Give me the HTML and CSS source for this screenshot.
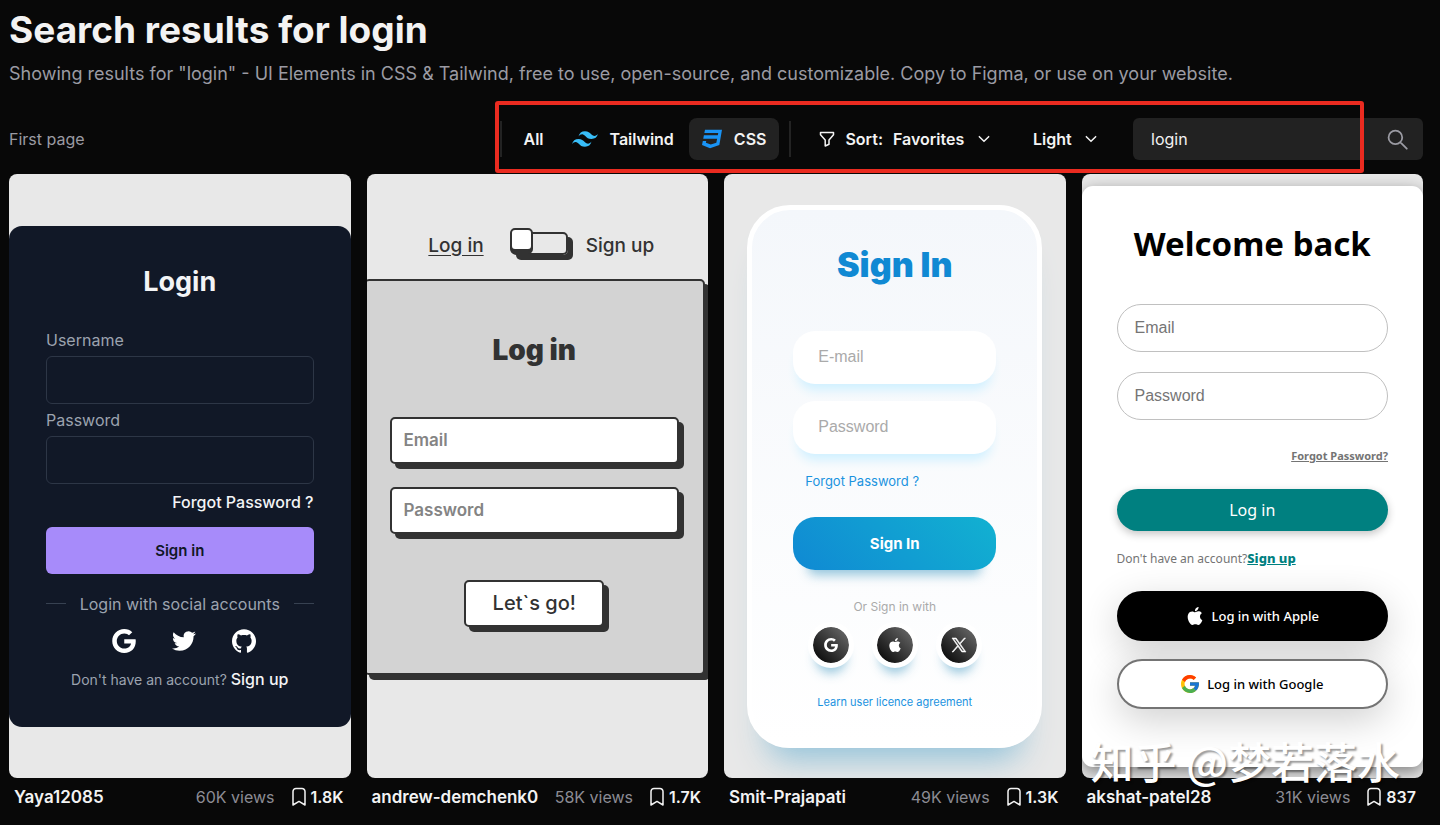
FILE: index.html
```html
<!DOCTYPE html>
<html lang="en">
<head>
    <meta charset="UTF-8">
    <meta name="viewport" content="width=device-width, initial-scale=1.0">
    <title>Search results for login</title>
    <link rel="stylesheet" href="styles.css">
</head>
<body>
    <!-- shared icons -->
    <svg class="sprite" aria-hidden="true">
        <symbol id="i-google" viewBox="0 0 32 32"><path d="M16.318 13.714v5.484h9.078c-0.37 2.354-2.745 6.901-9.078 6.901-5.458 0-9.917-4.521-9.917-10.099s4.458-10.099 9.917-10.099c3.109 0 5.193 1.318 6.38 2.464l4.339-4.182c-2.786-2.599-6.396-4.182-10.719-4.182-8.844 0-16 7.151-16 16s7.156 16 16 16c9.234 0 15.365-6.49 15.365-15.635 0-1.052-0.115-1.854-0.255-2.651z"/></symbol>
        <symbol id="i-apple" viewBox="0 0 24 24"><path d="M12.152 6.896c-.948 0-2.415-1.078-3.96-1.04-2.04.027-3.91 1.183-4.961 3.014-2.117 3.675-.546 9.103 1.519 12.09 1.013 1.454 2.208 3.09 3.792 3.039 1.52-.065 2.09-.987 3.935-.987 1.831 0 2.35.987 3.96.948 1.637-.026 2.676-1.48 3.676-2.948 1.156-1.688 1.636-3.325 1.662-3.415-.039-.013-3.182-1.221-3.22-4.857-.026-3.04 2.48-4.494 2.597-4.559-1.429-2.09-3.623-2.324-4.39-2.376-2-.156-3.675 1.09-4.61 1.09zM15.53 3.83c.843-1.012 1.4-2.427 1.245-3.83-1.207.052-2.662.805-3.532 1.818-.78.896-1.454 2.338-1.273 3.714 1.338.104 2.715-.688 3.559-1.701"/></symbol>
        <symbol id="i-chevron" viewBox="0 0 12 12"><path d="M2 4l4 4 4-4" fill="none" stroke="currentColor" stroke-width="1.3" stroke-linecap="round" stroke-linejoin="round"/></symbol>
        <symbol id="i-bookmark" viewBox="0 0 16 20"><path d="M2 18V4.500a3 3 0 0 1 3-3h6a3 3 0 0 1 3 3V18l-6-3.600z" fill="none" stroke="currentColor" stroke-width="1.500" stroke-linejoin="round"/></symbol>
    </svg>

    <div class="page">
        <h1 class="title">Search results for login</h1>
        <p class="subtitle">Showing results for "login" - UI Elements in CSS &amp; Tailwind, free to use, open-source, and customizable. Copy to Figma, or use on your website.</p>

        <div class="toolbar">
            <span class="page-label">First page</span>
            <div class="filters">
                <span class="divider"></span>
                <nav class="tabs">
                    <a class="tab" href="#">All</a>
                    <a class="tab" href="#">
                        <svg class="tab-icon tailwind" viewBox="0 0 24 24"><path d="M12.001 4.800c-3.200 0-5.200 1.600-6 4.800 1.200-1.600 2.600-2.200 4.200-1.800.913.228 1.565.89 2.288 1.624C13.666 10.618 15.027 12 18.001 12c3.200 0 5.200-1.600 6-4.800-1.200 1.600-2.600 2.200-4.200 1.800-.913-.228-1.565-.89-2.288-1.624C16.337 6.182 14.976 4.800 12.001 4.800zm-6 7.200c-3.200 0-5.200 1.600-6 4.800 1.200-1.600 2.600-2.200 4.200-1.800.913.228 1.565.89 2.288 1.624 1.177 1.194 2.538 2.576 5.512 2.576 3.200 0 5.200-1.600 6-4.800-1.200 1.600-2.600 2.200-4.200 1.800-.913-.228-1.565-.89-2.288-1.624C10.337 13.382 8.976 12 6.001 12z"/></svg>
                        Tailwind
                    </a>
                    <a class="tab active" href="#">
                        <svg class="tab-icon css" viewBox="0 0 480 432"><path d="M480 32l-64 368-223.300 80L0 400l19.600-94.800h82l-8 40.600L210 390.200l134.100-44.400 18.800-97.100H29.500l16-82h333.700l10.500-52.700H56.300l16.300-82H480z" transform="translate(0 -40)"/></svg>
                        CSS
                    </a>
                </nav>
                <span class="divider"></span>
                <div class="dropdown sort">
                    <svg class="funnel" viewBox="0 0 16 16"><path d="M1.500 1.500h13v2.200L10 9v4.200L6.200 15V9L1.500 3.700z" fill="none" stroke="currentColor" stroke-width="1.500" stroke-linejoin="round"/></svg>
                    <label for="sort">Sort:</label>
                    <select id="sort"><option>Favorites</option></select>
                    <svg class="chevron"><use href="#i-chevron"/></svg>
                </div>
                <div class="dropdown">
                    <select id="theme" aria-label="Theme"><option>Light</option></select>
                    <svg class="chevron"><use href="#i-chevron"/></svg>
                </div>
                <form class="search">
                    <input type="text" value="login" aria-label="Search">
                    <button type="button" aria-label="Search">
                        <svg viewBox="0 0 20 20"><path d="M8 1.500a6.500 6.500 0 1 0 0 13 6.500 6.500 0 0 0 0-13zM12.800 12.800l6 6" fill="none" stroke="currentColor" stroke-width="1.700" stroke-linecap="round"/></svg>
                    </button>
                </form>
                <span class="highlight"></span>
            </div>
        </div>

        <div class="grid">
            <article class="item">
                <div class="preview">
                    <form class="dark-card">
                        <h2>Login</h2>
                        <label for="dark-user">Username</label>
                        <input id="dark-user" type="text">
                        <label for="dark-pass">Password</label>
                        <input id="dark-pass" type="password">
                        <a class="forgot" href="#">Forgot Password ?</a>
                        <button type="button" class="sign">Sign in</button>
                        <div class="social-line">Login with social accounts</div>
                        <div class="social">
                            <a href="#" aria-label="Google"><svg><use href="#i-google"/></svg></a>
                            <a href="#" aria-label="Twitter"><svg viewBox="0 0 24 24"><path d="M23.953 4.570a10 10 0 01-2.825.775 4.958 4.958 0 002.163-2.723c-.951.555-2.005.959-3.127 1.184a4.920 4.920 0 00-8.384 4.482C7.690 8.095 4.067 6.130 1.640 3.162a4.822 4.822 0 00-.666 2.475c0 1.710.870 3.213 2.188 4.096a4.904 4.904 0 01-2.228-.616v.060a4.923 4.923 0 003.946 4.827 4.996 4.996 0 01-2.212.085 4.936 4.936 0 004.604 3.417 9.867 9.867 0 01-6.102 2.105c-.390 0-.779-.023-1.170-.067a13.995 13.995 0 007.557 2.209c9.053 0 13.998-7.496 13.998-13.985 0-.210 0-.420-.015-.630A9.935 9.935 0 0024 4.590z"/></svg></a>
                            <a href="#" aria-label="GitHub"><svg viewBox="0 0 24 24"><path d="M12 .297c-6.630 0-12 5.373-12 12 0 5.303 3.438 9.800 8.205 11.385.600.113.820-.258.820-.577 0-.285-.010-1.040-.015-2.040-3.338.724-4.042-1.610-4.042-1.610C4.422 18.070 3.633 17.700 3.633 17.700c-1.087-.744.084-.729.084-.729 1.205.084 1.838 1.236 1.838 1.236 1.070 1.835 2.809 1.305 3.495.998.108-.776.417-1.305.760-1.605-2.665-.300-5.466-1.332-5.466-5.930 0-1.310.465-2.380 1.235-3.220-.135-.303-.540-1.523.105-3.176 0 0 1.005-.322 3.300 1.230.960-.267 1.980-.399 3-.405 1.020.006 2.040.138 3 .405 2.280-1.552 3.285-1.230 3.285-1.230.645 1.653.240 2.873.120 3.176.765.840 1.230 1.910 1.230 3.220 0 4.610-2.805 5.625-5.475 5.920.420.360.810 1.096.810 2.220 0 1.606-.015 2.896-.015 3.286 0 .315.210.690.825.570C20.565 22.092 24 17.592 24 12.297c0-6.627-5.373-12-12-12"/></svg></a>
                        </div>
                        <p class="signup">Don't have an account? <a href="#">Sign up</a></p>
                    </form>
                </div>
                <div class="meta">
                    <a class="author" href="#">Yaya12085</a>
                    <span class="views">60K views</span>
                    <span class="saves"><svg><use href="#i-bookmark"/></svg>1.8K</span>
                </div>
            </article>

            <article class="item">
                <div class="preview">
                    <div class="flip">
                        <label class="switch">
                            <span class="on">Log in</span>
                            <input type="checkbox" aria-label="Sign up">
                            <span class="track"></span>
                            <span>Sign up</span>
                        </label>
                        <form class="flip-card">
                            <h2>Log in</h2>
                            <input type="email" placeholder="Email" aria-label="Email">
                            <input type="password" placeholder="Password" aria-label="Password">
                            <button type="button">Let`s go!</button>
                        </form>
                    </div>
                </div>
                <div class="meta">
                    <a class="author" href="#">andrew-demchenk0</a>
                    <span class="views">58K views</span>
                    <span class="saves"><svg><use href="#i-bookmark"/></svg>1.7K</span>
                </div>
            </article>

            <article class="item">
                <div class="preview">
                    <form class="blue-card">
                        <h2>Sign In</h2>
                        <input type="email" placeholder="E-mail" aria-label="E-mail">
                        <input type="password" placeholder="Password" aria-label="Password">
                        <a class="forgot" href="#">Forgot Password ?</a>
                        <button type="button" class="sign">Sign In</button>
                        <p class="or">Or Sign in with</p>
                        <div class="accounts">
                            <button type="button" aria-label="Google"><svg><use href="#i-google"/></svg></button>
                            <button type="button" aria-label="Apple"><svg><use href="#i-apple"/></svg></button>
                            <button type="button" aria-label="X"><svg viewBox="0 0 24 24"><path d="M14.258 10.152L23.176 0h-2.113l-7.747 8.813L7.133 0H0l9.352 13.328L0 23.973h2.113l8.176-9.309 6.531 9.309h7.133zm-2.895 3.293l-.949-1.328L2.875 1.560h3.246l6.086 8.523.945 1.328 7.910 11.078h-3.246zm0 0" stroke="currentColor" stroke-width="1"/></svg></button>
                        </div>
                        <a class="licence" href="#">Learn user licence agreement</a>
                    </form>
                </div>
                <div class="meta">
                    <a class="author" href="#">Smit-Prajapati</a>
                    <span class="views">49K views</span>
                    <span class="saves"><svg><use href="#i-bookmark"/></svg>1.3K</span>
                </div>
            </article>

            <article class="item">
                <div class="preview">
                    <form class="white-card">
                        <h2>Welcome back</h2>
                        <input type="email" placeholder="Email" aria-label="Email">
                        <input type="password" placeholder="Password" aria-label="Password">
                        <a class="forgot" href="#">Forgot Password?</a>
                        <button type="button" class="login">Log in</button>
                        <p class="signup">Don't have an account?<a href="#">Sign up</a></p>
                        <button type="button" class="provider apple">
                            <svg><use href="#i-apple"/></svg>
                            Log in with Apple
                        </button>
                        <button type="button" class="provider">
                            <svg viewBox="4 4 40 40">
                                <path fill="#FFC107" d="M43.611 20.083H42V20H24v8h11.303c-1.649 4.657-6.080 8-11.303 8-6.627 0-12-5.373-12-12s5.373-12 12-12c3.059 0 5.842 1.154 7.961 3.039l5.657-5.657C34.046 6.053 29.268 4 24 4 12.955 4 4 12.955 4 24s8.955 20 20 20 20-8.955 20-20c0-1.341-.138-2.650-.389-3.917z"/>
                                <path fill="#FF3D00" d="M6.306 14.691l6.571 4.819C14.655 15.108 18.961 12 24 12c3.059 0 5.842 1.154 7.961 3.039l5.657-5.657C34.046 6.053 29.268 4 24 4 16.318 4 9.656 8.337 6.306 14.691z"/>
                                <path fill="#4CAF50" d="M24 44c5.166 0 9.860-1.977 13.409-5.192l-6.190-5.238C29.211 35.091 26.715 36 24 36c-5.202 0-9.619-3.317-11.283-7.946l-6.522 5.025C9.505 39.556 16.227 44 24 44z"/>
                                <path fill="#1976D2" d="M43.611 20.083H42V20H24v8h11.303c-.792 2.237-2.231 4.166-4.087 5.571l6.193 5.238C36.971 39.205 44 34 44 24c0-1.341-.138-2.650-.389-3.917z"/>
                            </svg>
                            Log in with Google
                        </button>
                    </form>
                </div>
                <div class="meta">
                    <a class="author" href="#">akshat-patel28</a>
                    <span class="views">31K views</span>
                    <span class="saves"><svg><use href="#i-bookmark"/></svg>837</span>
                </div>
                <span class="watermark" lang="zh">知乎 @梦若落水</span>
            </article>
        </div>
    </div>
</body>
</html>
```

FILE: styles.css
```css
*{
    margin: 0;
    padding: 0;
    box-sizing: border-box;
}
body{
    background: #080808;
    color: #f3f3f3;
    font-family: Inter, "Liberation Sans", sans-serif;
    font-size: 16px;
}
a{
    color: inherit;
    text-decoration: none;
}
button,
select{
    font: inherit;
    border: none;
    cursor: pointer;
}
input{
    outline: none;
    min-width: 0;
}
svg{
    display: block;
    fill: currentColor;
}
.sprite{
    position: absolute;
    width: 0;
    height: 0;
}
.page{
    padding: 8px 17px 0 9px;
}
.title{
    font-size: 37px;
    line-height: 44px;
    font-weight: 700;
}
.subtitle{
    margin-top: 8px;
    color: #9b9ba3;
    font-size: 18px;
    line-height: 28px;
}

/* toolbar */
.toolbar{
    display: flex;
    justify-content: space-between;
    align-items: center;
    margin-top: 30px;
}
.page-label{
    color: #9b9ba3;
}
.filters{
    position: relative;
    display: flex;
    align-items: center;
    height: 42px;
    font-weight: 600;
}
.divider{
    width: 2px;
    height: 36px;
    background: #232323;
}
.tabs{
    display: flex;
    gap: 2px;
    padding: 0 10px 0 8px;
}
.tab{
    display: flex;
    align-items: center;
    gap: 12px;
    height: 42px;
    padding: 0 13px;
    border-radius: 8px;
}
.tab.active{
    background: #222;
}
.tailwind{
    width: 26px;
    height: 26px;
    color: #38bdf8;
}
.css{
    width: 20px;
    height: 18px;
    color: #1a94f5;
    overflow: visible;
}
.dropdown{
    display: flex;
    align-items: center;
    gap: 10px;
    padding: 0 16px;
    margin-right: 19px;
}
.dropdown.sort{
    padding-left: 28px;
    margin-right: 10px;
}
.dropdown select{
    appearance: none;
    background: none;
    color: inherit;
}
.funnel{
    width: 16px;
    height: 16px;
}
.chevron{
    width: 14px;
    height: 14px;
    margin-left: 2px;
}
.search{
    display: flex;
    align-items: center;
    width: 290px;
    height: 42px;
    background: #222;
    border-radius: 6px;
}
.search input{
    flex: 1;
    height: 42px;
    padding: 0 18px;
    background: none;
    border: none;
    color: #f3f3f3;
    font: inherit;
    font-weight: 400;
}
.search button{
    padding: 0 15px;
    background: none;
    color: #9b9ba3;
}
.search svg{
    width: 21px;
    height: 21px;
}
.highlight{
    position: absolute;
    top: -17px;
    bottom: -13px;
    left: -5px;
    right: 59px;
    border: 4px solid #ea2b20;
    border-radius: 3px;
    pointer-events: none;
}

/* results */
.grid{
    display: grid;
    grid-template-columns: repeat(4, minmax(0, 1fr));
    gap: 16px;
    margin-top: 14px;
}
.item{
    position: relative;
}
.preview{
    display: flex;
    align-items: center;
    justify-content: center;
    height: 604px;
    overflow: hidden;
    background: #e8e8e8;
    border-radius: 8px;
}
.meta{
    display: flex;
    align-items: center;
    height: 38px;
    padding: 0 7px 0 5px;
    font-weight: 600;
}
.author{
    flex: 1;
    font-size: 17px;
}
.views{
    color: #8c8c94;
    font-weight: 400;
}
.saves{
    display: flex;
    align-items: center;
    gap: 4px;
    margin-left: 16px;
}
.saves svg{
    width: 16px;
    height: 20px;
}

/* dark login */
.dark-card{
    display: flex;
    flex-direction: column;
    width: 100%;
    height: 501px;
    padding: 37px;
    background: #111827;
    color: #f3f4f6;
    border-radius: 13px;
}
.dark-card h2{
    font-size: 27px;
    line-height: 38px;
    text-align: center;
    margin-bottom: 27px;
}
.dark-card label{
    color: #9ca3af;
    line-height: 24px;
    margin-bottom: 4px;
}
.dark-card input{
    height: 48px;
    flex-shrink: 0;
    margin-bottom: 4px;
    padding: 0 16px;
    background: #111827;
    color: #f3f4f6;
    border: 1px solid #2d3646;
    border-radius: 6px;
}
.dark-card .forgot{
    align-self: flex-end;
    line-height: 28px;
    font-weight: 500;
    margin-bottom: 11px;
}
.dark-card .sign{
    height: 47px;
    flex-shrink: 0;
    background: #a78bfa;
    color: #111827;
    border-radius: 6px;
    font-size: 15px;
    font-weight: 600;
}
.social-line{
    display: flex;
    align-items: center;
    gap: 14px;
    margin-top: 18px;
    line-height: 24px;
    color: #9ca3af;
    white-space: nowrap;
}
.social-line::before,
.social-line::after{
    content: "";
    flex: 1;
    height: 1px;
    background: #374151;
}
.social{
    display: flex;
    justify-content: center;
    gap: 36px;
    margin: 13px 0 12px;
    padding-left: 9px;
}
.social svg{
    width: 24px;
    height: 24px;
    color: #fff;
}
.dark-card .signup{
    color: #9ca3af;
    font-size: 14px;
    line-height: 28px;
    text-align: center;
}
.dark-card .signup a{
    color: #f3f4f6;
    font-size: 16px;
    font-weight: 500;
}

/* log in / sign up switch */
.flip{
    width: 100%;
    color: #323232;
    padding-bottom: 51px;
}
.switch{
    display: flex;
    align-items: center;
    justify-content: center;
    gap: 27px;
    height: 52px;
    padding: 0 0 15px 8px;
    font-size: 19px;
    font-weight: 500;
    cursor: pointer;
}
.switch .on{
    text-decoration: underline;
    text-underline-offset: 3px;
}
.switch input{
    position: absolute;
    opacity: 0;
}
.track{
    position: relative;
    width: 57px;
    height: 23px;
    margin: 0 -9px 4px 0;
    border: 2px solid #323232;
    border-radius: 5px;
    box-shadow: 5px 5px #323232;
}
.track::before{
    content: "";
    position: absolute;
    box-sizing: border-box;
    left: -3px;
    top: -6px;
    width: 23px;
    height: 23px;
    background: #fff;
    border: 2px solid #323232;
    border-radius: 5px;
    box-shadow: 0 3px #323232;
}
.flip-card{
    display: flex;
    flex-direction: column;
    align-items: center;
    height: 396px;
    margin-left: -3px;
    margin-right: 3px;
    padding: 48px 24px 0;
    background: lightgrey;
    border: 2px solid #323232;
    border-radius: 5px;
    box-shadow: 5px 5px #323232;
}
.flip-card h2{
    font-size: 28px;
    line-height: 42px;
    font-weight: 900;
    margin-bottom: 46px;
}
.flip-card input,
.flip-card button{
    height: 47px;
    background: #fff;
    border: 2px solid #323232;
    border-radius: 5px;
    box-shadow: 5px 5px #323232;
}
.flip-card input{
    width: 100%;
    padding: 0 12px;
    font: 600 17px Inter, sans-serif;
    margin-bottom: 23px;
}
.flip-card input::placeholder{
    color: #848484;
    opacity: 1;
}
.flip-card button{
    width: 140px;
    margin-top: 23px;
    color: #323232;
    font-size: 20px;
    font-weight: 500;
}

/* blue sign in */
.blue-card{
    display: flex;
    flex-direction: column;
    align-items: center;
    width: 295px;
    height: 543px;
    padding: 31px 41px 0;
    background: linear-gradient(0deg, #fff, #f4f7fb);
    border: 5px solid #fff;
    border-radius: 43px;
    box-shadow: rgba(133, 189, 215, 0.88) 0 32px 32px -21px;
}
.blue-card h2{
    color: #1089d3;
    font-size: 34px;
    line-height: 48px;
    font-weight: 900;
    margin-bottom: 42px;
}
.blue-card input{
    width: 100%;
    height: 53px;
    padding: 0 25px;
    margin-bottom: 17px;
    background: #fff;
    border: none;
    border-radius: 22px;
    box-shadow: #cff0ff 0 11px 11px -5px;
    font: 16px "Liberation Sans", Arial, sans-serif;
}
.blue-card input::placeholder{
    color: #aaa;
}
.blue-card .forgot{
    align-self: flex-start;
    margin-left: 12px;
    color: #1a93df;
    font-size: 13px;
    line-height: 20px;
}
.blue-card .sign{
    width: 100%;
    height: 53px;
    margin-top: 26px;
    background: linear-gradient(45deg, #1089d3, #12b1d1);
    border-radius: 22px;
    box-shadow: rgba(133, 189, 215, 0.88) 0 20px 11px -15px;
    color: #fff;
    font-size: 15px;
    font-weight: 700;
}
.blue-card .or{
    margin-top: 27px;
    color: #aaa;
    font-size: 12px;
    line-height: 20px;
}
.accounts{
    display: flex;
    gap: 18px;
    margin-top: 5px;
}
.accounts button{
    display: flex;
    align-items: center;
    justify-content: center;
    width: 46px;
    height: 46px;
    background: linear-gradient(45deg, #000, #707070) padding-box, #fff;
    border: 5px solid #fff;
    border-radius: 50%;
    box-shadow: rgba(133, 189, 215, 0.88) 0 13px 11px -8px;
    color: #fff;
}
.accounts svg{
    width: 14px;
    height: 14px;
    overflow: visible;
}
.licence{
    margin-top: 24px;
    color: #1a93df;
    font-size: 11px;
    line-height: 20px;
}

/* welcome back */
.white-card{
    display: flex;
    flex-direction: column;
    width: 100%;
    height: 581px;
    padding: 32px 35px;
    background: #fff;
    color: #000;
    border-radius: 11px;
    box-shadow: rgba(0, 0, 0, 0.45) 0 5px 16px;
    font-family: "Noto Sans", "Open Sans", sans-serif;
}
.white-card h2{
    font-size: 33px;
    line-height: 52px;
    text-align: center;
    margin-bottom: 34px;
}
.white-card input{
    height: 48px;
    padding: 0 17px;
    margin-bottom: 20px;
    border: 1px solid #c0c0c0;
    border-radius: 24px;
    font: 16px "Liberation Sans", Arial, sans-serif;
}
.white-card input::placeholder{
    color: #757575;
}
.white-card .forgot{
    align-self: flex-end;
    margin: 6px 0 23px;
    color: #747474;
    font-size: 11px;
    line-height: 20px;
    font-weight: 700;
    text-decoration: underline;
}
.white-card .login{
    height: 42px;
    background: teal;
    border-radius: 21px;
    box-shadow: rgba(0, 0, 0, 0.24) 0 3px 8px;
    color: #fff;
    font-size: 16px;
}
.white-card .signup{
    margin: 17px 0 22px;
    color: #747474;
    font-size: 12px;
    line-height: 20px;
}
.white-card .signup a{
    color: teal;
    font-size: 13px;
    font-weight: 800;
    text-decoration: underline;
}
.provider{
    display: flex;
    align-items: center;
    justify-content: center;
    gap: 8px;
    height: 50px;
    margin-bottom: 18px;
    background: #fff;
    border: 2px solid #747474;
    border-radius: 25px;
    box-shadow: rgba(0, 0, 0, 0.19) 0 11px 38px;
    color: #000;
    font-size: 13px;
    font-weight: 500;
}
.provider.apple{
    background: #000;
    border-color: #000;
    color: #fff;
}
.provider svg{
    width: 18px;
    height: 18px;
}
.watermark{
    position: absolute;
    left: 9px;
    bottom: 34px;
    color: #fff;
    font-family: "Noto Sans CJK SC", sans-serif;
    font-size: 43px;
    font-weight: 500;
    line-height: 43px;
    white-space: nowrap;
    text-shadow: 2px 2px 2px rgba(0, 0, 0, 0.4);
    pointer-events: none;
}
```
